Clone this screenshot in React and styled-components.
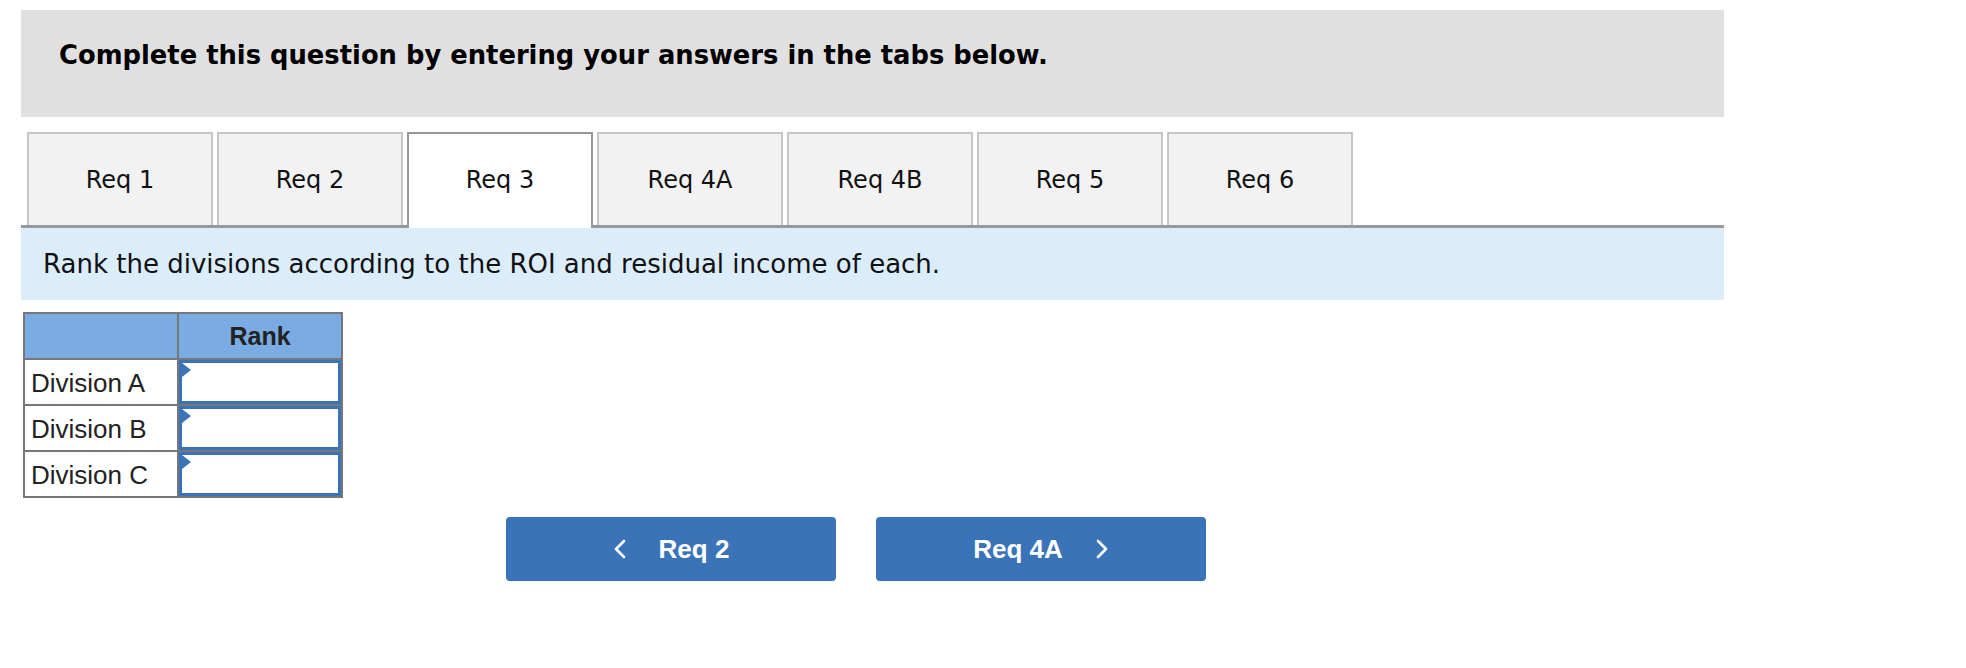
import React from "react";
import styled, { createGlobalStyle } from "styled-components";

const tabs = ["Req 1", "Req 2", "Req 3", "Req 4A", "Req 4B", "Req 5", "Req 6"];
const divisions = ["Division A", "Division B", "Division C"];

function Chevron({ dir }) {
  // thin chevron used on the prev / next buttons
  const d = dir === "left" ? "M11 2 L3 10 L11 18" : "M2 2 L10 10 L2 18";
  return (
    <svg width="13" height="20" viewBox="0 0 13 20">
      <path d={d} fill="none" stroke="#fff" strokeWidth="2.6" strokeLinecap="round" strokeLinejoin="round" />
    </svg>
  );
}

export default function App() {
  return (
    <>
      <GlobalStyle />
      <Page>
        <Banner>Complete this question by entering your answers in the tabs below.</Banner>

        <TabList>
          {tabs.map((t) => (
            <Tab key={t} $active={t === "Req 3"}>
              {t}
            </Tab>
          ))}
        </TabList>

        <Instruction>Rank the divisions according to the ROI and residual income of each.</Instruction>

        <RankTable>
          <thead>
            <tr>
              <HeadCell />
              <HeadCell>Rank</HeadCell>
            </tr>
          </thead>
          <tbody>
            {divisions.map((d) => (
              <tr key={d}>
                <LabelCell>{d}</LabelCell>
                <InputCell>
                  <InputBox>
                    <Marker />
                  </InputBox>
                </InputCell>
              </tr>
            ))}
          </tbody>
        </RankTable>

        <NavRow>
          <NavButton>
            <Chevron dir="left" />
            <span>Req 2</span>
          </NavButton>
          <NavButton>
            <span>Req 4A</span>
            <Chevron dir="right" />
          </NavButton>
        </NavRow>
      </Page>
    </>
  );
}

const GlobalStyle = createGlobalStyle`
  body {
    margin: 0;
    background: #fff;
  }
`;

const Page = styled.div`
  width: 1703px;
  padding: 10px 0 0 21px;
`;

const Banner = styled.div`
  box-sizing: border-box;
  height: 107px;
  background: #e0e0e0;
  padding: 30px 38px 0;
  font-family: "DejaVu Sans", Verdana, sans-serif;
  font-weight: bold;
  font-size: 25.8px;
  line-height: 30px;
  color: #000;
`;

const TabList = styled.div`
  display: flex;
  gap: 4px;
  margin-top: 15px;
  padding-left: 6px;
  border-bottom: 3px solid #999;
`;

const Tab = styled.div`
  box-sizing: border-box;
  width: 186px;
  height: ${(p) => (p.$active ? "96px" : "93px")};
  margin-bottom: ${(p) => (p.$active ? "-3px" : "0")};
  display: flex;
  align-items: center;
  justify-content: center;
  background: ${(p) => (p.$active ? "#fff" : "#f2f2f2")};
  border: 2px solid ${(p) => (p.$active ? "#999" : "#c6c6c6")};
  border-bottom: none;
  font-family: "DejaVu Sans", Verdana, sans-serif;
  font-size: 24px;
  color: #111;
  padding-bottom: ${(p) => (p.$active ? "3px" : "0")};
`;

const Instruction = styled.div`
  height: 72px;
  display: flex;
  align-items: center;
  padding-left: 22px;
  background: #dbecfa;
  font-family: "DejaVu Sans", Verdana, sans-serif;
  font-size: 26px;
  color: #111;
`;

const RankTable = styled.table`
  margin: 12px 0 0 2px;
  border-collapse: collapse;
  font-family: "Liberation Sans", Arial, sans-serif;
  font-size: 26px;
  color: #222;
`;

const HeadCell = styled.th`
  height: 44px;
  padding: 0;
  background: #7aace3;
  border: 2px solid #777;
  font-weight: bold;
  font-size: 25px;
  text-align: center;
  &:first-child {
    width: 152px;
  }
  &:last-child {
    width: 162px;
  }
`;

const LabelCell = styled.td`
  height: 44px;
  padding: 2px 0 0 6px;
  box-sizing: border-box;
  border: 2px solid #777;
  text-align: left;
`;

const InputCell = styled.td`
  padding: 0;
  border: 2px solid #777;
`;

const InputBox = styled.div`
  position: relative;
  box-sizing: border-box;
  height: 44px;
  background: #fff;
  border: 3px solid #3b73b9;
`;

const Marker = styled.span`
  position: absolute;
  top: 0;
  left: 0;
  width: 0;
  height: 0;
  border-top: 7px solid transparent;
  border-bottom: 7px solid transparent;
  border-left: 9px solid #3b73b9;
`;

const NavRow = styled.div`
  display: flex;
  gap: 40px;
  margin-top: 19px;
  padding-left: 485px;
`;

const NavButton = styled.button`
  width: 330px;
  height: 64px;
  display: flex;
  align-items: center;
  justify-content: center;
  gap: 33px;
  border: none;
  border-radius: 4px;
  background: #3b73b9;
  color: #fff;
  font-family: "Liberation Sans", Arial, sans-serif;
  font-weight: bold;
  font-size: 26px;
  cursor: pointer;
`;
